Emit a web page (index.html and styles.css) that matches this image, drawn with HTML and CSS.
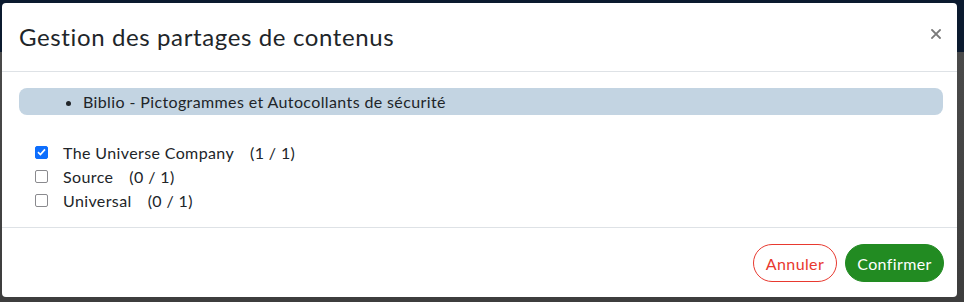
FILE: index.html
```html
<!DOCTYPE html>
<html lang="fr">
<head>
<meta charset="utf-8">
<link rel="stylesheet" href="styles.css">
</head>
<body>
<div class="modal">
  <div class="modal-header">
    <h5 class="modal-title">Gestion des partages de contenus</h5>
    <button class="close" aria-label="Fermer">
      <svg width="10" height="10" viewBox="0 0 10 10"><path d="M1 1L9 9M9 1L1 9" stroke="#7a7a7a" stroke-width="1.8" stroke-linecap="square"/></svg>
    </button>
  </div>
  <div class="modal-body">
    <div class="content-bar">
      <ul class="content-list"><li>Biblio - Pictogrammes et Autocollants de sécurité</li></ul>
    </div>
    <div class="share-list">
      <label class="share-row">
        <span class="box checked"><svg width="9" height="8" viewBox="0 0 9 8"><path d="M1 4.2L3.4 6.5L8 1.4" fill="none" stroke="#fff" stroke-width="1.7"/></svg></span>
        <span class="name">The Universe Company</span><span class="count">(1 / 1)</span>
      </label>
      <label class="share-row">
        <span class="box"></span>
        <span class="name">Source</span><span class="count">(0 / 1)</span>
      </label>
      <label class="share-row">
        <span class="box"></span>
        <span class="name">Universal</span><span class="count">(0 / 1)</span>
      </label>
    </div>
  </div>
  <div class="modal-footer">
    <button class="btn btn-cancel">Annuler</button>
    <button class="btn btn-confirm">Confirmer</button>
  </div>
</div>
</body>
</html>
```

FILE: styles.css
```css
html, body {
  margin: 0;
  height: 100%;
}
body {
  background: linear-gradient(#0b1a2f 0, #0b1a2f 52px, #4a4a4a 52px, #3d3d3d 100%);
  padding: 3px 7px 0 2px;
  box-sizing: border-box;
  font-family: "Lato", "Open Sans", sans-serif;
  color: #212529;
}
.modal {
  background: #fff;
  border-radius: 4px;
  width: 955px;
  height: 294px;
  display: flex;
  flex-direction: column;
}
.modal-header {
  display: flex;
  align-items: center;
  justify-content: space-between;
  height: 68px;
  padding: 0 16px 0 17px;
  border-bottom: 1px solid #dee2e6;
}
.modal-title {
  margin: 0;
  font-size: 24px;
  font-weight: 400;
  line-height: 36px;
  letter-spacing: 0.62px;
  color: #212529;
}
.close {
  border: 0;
  background: none;
  padding: 0;
  width: 10px;
  height: 10px;
  margin-top: -7px;
  display: flex;
}
.modal-body {
  padding: 16px 14px 15px 17px;
  border-bottom: 1px solid #dee2e6;
}
.content-bar {
  background: #c3d4e2;
  border-radius: 8px;
  height: 27px;
  display: flex;
  align-items: center;
}
.content-list {
  margin: 0;
  padding-left: 64px;
  font-size: 16px;
  letter-spacing: 0.38px;
  line-height: 20px;
}
.share-list {
  margin-top: 25px;
  padding-left: 16px;
  display: flex;
  flex-direction: column;
}
.share-row {
  display: flex;
  align-items: center;
  height: 24px;
  font-size: 16px;
  letter-spacing: 0.38px;
}
.box {
  width: 13px;
  height: 13px;
  box-sizing: border-box;
  border: 1.5px solid #8a8a8e;
  border-radius: 2px;
  margin-right: 15px;
  display: flex;
  align-items: center;
  justify-content: center;
}
.box.checked {
  background: #0d6efd;
  border-color: #0d6efd;
}
.count {
  margin-left: 16px;
}
.modal-footer {
  flex: 1;
  display: flex;
  justify-content: flex-end;
  align-items: flex-start;
  gap: 8px;
  padding: 16px 13px 0 0;
}
.btn {
  height: 38px;
  border-radius: 19px;
  font-family: inherit;
  font-size: 16px;
  letter-spacing: 0.38px;
  padding: 0;
  cursor: pointer;
}
.btn-cancel {
  width: 84px;
  background: #fff;
  border: 1px solid #e8392f;
  color: #e8392f;
}
.btn-confirm {
  width: 99px;
  background: #228b22;
  border: 1px solid #228b22;
  color: #fff;
}
```
